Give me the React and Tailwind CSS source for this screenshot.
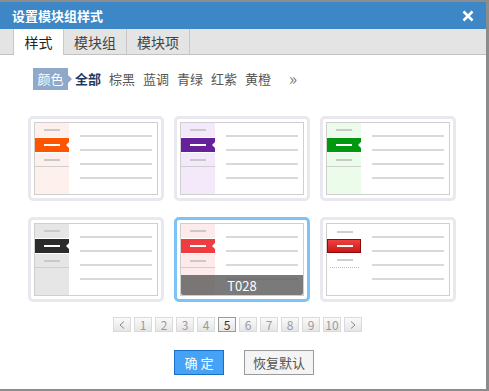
import React from "react";

const FONT = { fontFamily: '"Noto Sans CJK SC", "Noto Sans", sans-serif' };

function Card({ tint, active, selected, variant, label }) {
  return (
    <div
      className={`w-[136px] h-[85px] rounded-[5px] border-[3px] p-[3px] ${
        selected ? "border-[#7dc3f7]" : "border-[#e8e8ee]"
      }`}
    >
      <div className="relative w-full h-full border border-[#cfcfcf] bg-white flex overflow-hidden">
        {variant === "button" ? (
          <div className="w-[34px] flex flex-col">
            <div className="h-[15px] flex items-center pl-[10px]">
              <div className="w-[16px] h-[2px] bg-[#cfcfcf]" />
            </div>
            <div className="h-[14px] w-[34px] border border-[#8f0a0a] bg-gradient-to-b from-[#f0413f] to-[#c81515] flex items-center pl-[9px]">
              <div className="w-[16px] h-[2px] bg-white" />
            </div>
            <div className="h-[14px] flex items-center pl-[10px]">
              <div className="w-[16px] h-[2px] bg-[#cfcfcf]" />
            </div>
            <div className="ml-[3px] w-[29px] border-t border-dotted border-[#bbbbbb]" />
          </div>
        ) : (
          <div className="w-[34px] flex flex-col" style={{ background: tint }}>
            <div className="h-[15px] flex items-center pl-[9px] border-b border-white">
              <div className="w-[16px] h-[2px] bg-[#c9c9c9]" />
            </div>
            <div className="relative h-[14px] flex items-center pl-[9px]" style={{ background: active }}>
              <div className="w-[16px] h-[2px] bg-white" />
              <div className="absolute right-0 top-[4px] w-0 h-0 border-y-[3px] border-y-transparent border-r-[3px] border-r-white" />
            </div>
            <div className="h-[15px] flex items-center pl-[9px] border-t border-white border-b border-b-[#cfcfcf]">
              <div className="w-[16px] h-[2px] bg-[#c9c9c9]" />
            </div>
          </div>
        )}
        <div className="flex-1 flex flex-col pt-[12px] pl-[11px] pr-[5px] gap-[12px]">
          <div className="h-[2px] bg-[#d9d9d9]" />
          <div className="h-[2px] bg-[#d9d9d9]" />
          <div className="h-[2px] bg-[#d9d9d9]" />
          <div className="h-[2px] bg-[#d9d9d9]" />
        </div>
        {label && (
          <div className="absolute left-0 right-0 bottom-0 h-[20px] bg-[rgba(85,85,85,0.78)] rounded-b-[2px] flex items-center justify-center text-white text-[13px] leading-none">
            {label}
          </div>
        )}
      </div>
    </div>
  );
}

export default function App() {
  const pages = ["1", "2", "3", "4", "5", "6", "7", "8", "9", "10"];
  return (
    <div className="w-[489px] h-[391px] bg-[#8c8c8c] overflow-hidden" style={FONT}>
      <div className="mt-[2px] w-[486px] h-[387px] bg-white flex flex-col">
        <div className="h-[27px] bg-[#3e87c6] flex items-center justify-between pl-[12px] pr-[12px]">
          <span className="text-white text-[13px] font-bold leading-none">设置模块组样式</span>
          <svg width="12" height="12" viewBox="0 0 12 12">
            <path d="M1.5 1.5 L10.5 10.5 M10.5 1.5 L1.5 10.5" stroke="white" strokeWidth="2.6" />
          </svg>
        </div>
        <div className="h-[26px] bg-[#e4e4e4] border-b border-[#c2c2c2] flex pl-[13px]">
          <div className="w-[51px] h-[26px] bg-white border-x border-[#c8c8c8] flex items-center justify-center text-[14px] text-[#222] leading-none">
            样式
          </div>
          <div className="w-[63px] border-r border-[#c8c8c8] flex items-center justify-center text-[14px] text-[#444] leading-none">
            模块组
          </div>
          <div className="w-[63px] border-r border-[#c8c8c8] flex items-center justify-center text-[14px] text-[#444] leading-none">
            模块项
          </div>
        </div>
        <div className="flex items-center pl-[33px] mt-[12px] h-[23px] text-[13px] leading-none">
          <div className="relative h-[22px] w-[35px] bg-[#8ea9c9] text-white flex items-center justify-center">
            颜色
            <div className="absolute right-[-4px] top-[7px] w-0 h-0 border-y-[4px] border-y-transparent border-l-[4px] border-l-[#8ea9c9]" />
          </div>
          <span className="ml-[7px] font-bold text-[#1d3a63]">全部</span>
          <span className="ml-[8px] text-[#555]">棕黑</span>
          <span className="ml-[8px] text-[#555]">蓝调</span>
          <span className="ml-[8px] text-[#555]">青绿</span>
          <span className="ml-[8px] text-[#555]">红紫</span>
          <span className="ml-[8px] text-[#555]">黄橙</span>
          <span className="ml-[18px] text-[#777] text-[17px] leading-none pb-[2px]">»</span>
        </div>
        <div className="ml-[28px] mt-[26px] grid grid-cols-[136px_136px_136px] gap-x-[10px] gap-y-[16px]">
          <Card tint="#fef1ed" active="#fe5500" />
          <Card tint="#f3e9fb" active="#66209c" />
          <Card tint="#ebfdea" active="#00980e" />
          <Card tint="#e6e6e6" active="#2b2b2b" />
          <Card tint="#fdeaea" active="#ee3c40" selected label="T028" />
          <Card variant="button" />
        </div>
        <div className="flex ml-[113px] mt-[15px] gap-[3px]">
          {["‹", ...pages, "›"].map((p, i) => (
            <div
              key={i}
              className={`w-[18px] h-[15px] flex items-center justify-center text-[12px] leading-none bg-gradient-to-b from-[#fafafa] to-[#e6e6e6] border ${
                p === "5" ? "border-[#9a9a9a] text-[#333]" : "border-[#dadada] text-[#9a9a9a]"
              }`}
            >
              {p === "‹" ? (
                <svg width="6" height="8" viewBox="0 0 6 8"><path d="M5 0.5 L1 4 L5 7.5" fill="none" stroke="#888" strokeWidth="1" /></svg>
              ) : p === "›" ? (
                <svg width="6" height="8" viewBox="0 0 6 8"><path d="M1 0.5 L5 4 L1 7.5" fill="none" stroke="#888" strokeWidth="1" /></svg>
              ) : (
                p
              )}
            </div>
          ))}
        </div>
        <div className="flex ml-[174px] mt-[18px] gap-[20px]">
          <div className="w-[50px] h-[25px] bg-[#46a2f7] border border-[#1b6ec6] text-white text-[13px] flex items-center justify-center leading-none">
            确 定
          </div>
          <div className="w-[70px] h-[25px] bg-[#f4f4f4] border border-[#9a9a9a] text-[#555] text-[13px] flex items-center justify-center leading-none">
            恢复默认
          </div>
        </div>
      </div>
    </div>
  );
}
